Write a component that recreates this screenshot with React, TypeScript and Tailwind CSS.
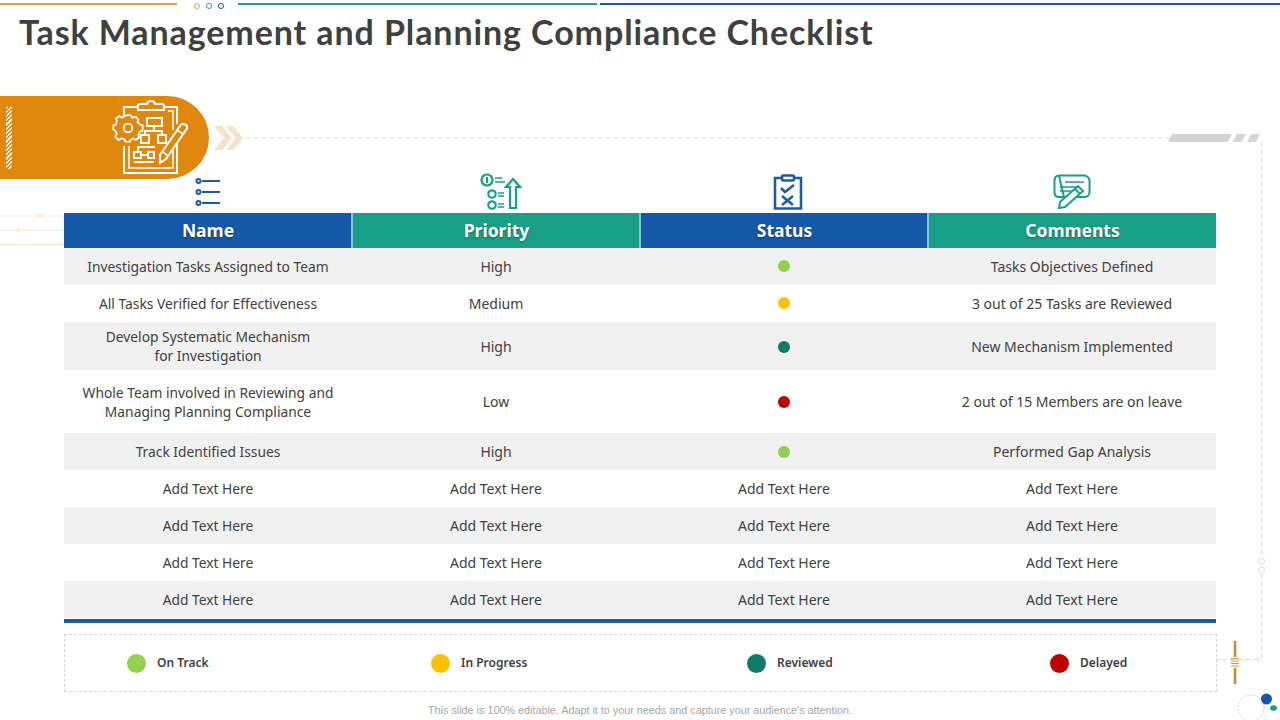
import React from "react";

const body = { fontFamily: '"Noto Sans", "Open Sans", sans-serif' };

function Decor() {
  return (
    <svg className="absolute left-0 top-0 pointer-events-none" width="1280" height="720" viewBox="0 0 1280 720" fill="none">
      <path d="M245 138H1170" stroke="#d9d9d9" strokeDasharray="5 3" />
      <path d="M1261.5 142V659.5H1217" stroke="#d9d9d9" strokeDasharray="5 3" />
      <path d="M1172 134H1232L1228 142H1168Z" fill="#d4d4d4" />
      <path d="M1237 134H1246L1242 142H1233Z" fill="#d4d4d4" />
      <path d="M1251 134H1260L1256 142H1247Z" fill="#d4d4d4" />
      <circle cx="1261.5" cy="561" r="3" stroke="#dcdcdc" fill="#fff" />
      <circle cx="1261.5" cy="570" r="3" stroke="#dcdcdc" fill="#fff" />
      <path d="M1235 641V657M1235 668V684" stroke="#c98a2b" strokeWidth="2.500" />
      <path d="M1231 658.5H1239M1231 661H1239M1231 663.500H1239M1231 666H1239" stroke="#d29a3c" />
      <circle cx="1251" cy="708" r="13" stroke="#cdb796" strokeDasharray="1 1.500" />
      <circle cx="1266.500" cy="699" r="5.500" fill="#1558a8" />
      <ellipse cx="1273.500" cy="708" rx="3.500" ry="2.800" fill="#17a085" />
      <path d="M0 216H64M0 230H64M0 244.500H64" stroke="#f8e8d4" />
      <path d="M37 216l3-2 3 2-3 2zM15 230l3-2 3 2-3 2z" fill="#f8e8d4" />
      <path d="M214 126H222L232 138L222 150H214L224 138Z" fill="#f6e2ca" />
      <path d="M226 126H233L243 138L233 150H226L236 138Z" fill="#f6e2ca" />
    </svg>
  );
}

function BannerIcon() {
  return (
    <svg width="78" height="76" viewBox="0 0 78 76" fill="none" stroke="#fff" strokeWidth="2">
      <path d="M13 16V7H27M53 7H66V24M66 44V73H13V46" />
      <path d="M57 11H62V30M62 50V68H18V46" strokeWidth="1.600" />
      <path d="M27 10V5C27 4 28 4 30 4H36C37 0 43 0 44 4H50C52 4 53 5 53 6V10Z" />
      <g transform="translate(17 28) scale(.86) translate(-16 -28)">
        <path d="M16 13L19 13L21 16L25 15L28 18L27 21L30 24L33 25V31L30 32L28 36L29 39L25 42L22 40L19 42L18 44H13L12 41L8 40L5 42L1 38L3 35L1 31L-1 30V25L2 24L3 20L2 17L6 14L9 16L12 14Z" />
        <circle cx="16" cy="28" r="5" />
      </g>
      <rect x="36" y="18" width="15" height="8" />
      <rect x="30" y="35" width="8" height="8" />
      <rect x="47" y="35" width="8" height="8" />
      <path d="M43 26V31M34 35V31H51V35" />
      <rect x="23" y="52" width="7" height="6" />
      <rect x="37" y="52" width="6" height="6" />
      <path d="M30 55H37M27 52V47H44M23 62H43" />
      <path d="M49 63V55L69 26C70 24 73 23 75 25C77 27 76 29 75 30L55 59Z" />
      <path d="M66 30L72 34M52 52L57 56" strokeWidth="1.600" />
    </svg>
  );
}

function ListIcon() {
  return (
    <svg width="26" height="30" viewBox="0 0 26 30" fill="none" stroke="#1f5ba5" strokeWidth="2">
      <circle cx="3.500" cy="4" r="2" />
      <circle cx="3.500" cy="15" r="2" />
      <circle cx="3.500" cy="26" r="2" />
      <path d="M7 4H25M7 15H25M7 26H25" />
    </svg>
  );
}

function PriorityIcon() {
  return (
    <svg width="42" height="38" viewBox="0 0 42 38" fill="none" stroke="#17a085" strokeWidth="2.200">
      <circle cx="7" cy="7" r="5.500" />
      <path d="M7 4V10" />
      <circle cx="12" cy="21" r="3.700" />
      <circle cx="12" cy="32" r="3.700" />
      <path d="M15 5H22M15 9H25M18 20H24M18 23H24M18 31H24M18 34H24" strokeWidth="1.600" />
      <path d="M30 35V14H26L33 6L40 14H36V35Z" />
    </svg>
  );
}

function StatusIcon() {
  return (
    <svg width="30" height="36" viewBox="0 0 30 36" fill="none" stroke="#1f5ba5" strokeWidth="2.600">
      <path d="M9 4H2V34.500H28V4H21" />
      <rect x="9" y="1.500" width="12" height="5" rx="1.500" />
      <path d="M8 14L12 18L21 11" />
      <path d="M9 22L20 31M20 22L9 31" />
    </svg>
  );
}

function CommentIcon() {
  return (
    <svg width="38" height="36" viewBox="0 0 38 36" fill="none" stroke="#17a085" strokeWidth="2">
      <path d="M6 1.500H31C34 1.500 36.500 4 36.500 7V18C36.500 21 34 23 31 23H24M11 23H6C3 23 1.500 21 1.500 18V7C1.500 4 3 1.500 6 1.500Z" />
      <path d="M12 8H31M7 13H26M7 17H18" strokeWidth="1.600" />
      <path d="M7 28L25 12L30 17L12 33L6 34Z" />
      <path d="M22 15L27 20" />
    </svg>
  );
}

const rows: { name: React.ReactNode; priority: string; status: string | null; comment: string; h: string; shade: boolean }[] = [
  { name: "Investigation Tasks Assigned to Team", priority: "High", status: "bg-[#92d050] -translate-y-px", comment: "Tasks Objectives Defined", h: "h-[37px]", shade: true },
  { name: "All Tasks Verified for Effectiveness", priority: "Medium", status: "bg-[#ffc000] -translate-y-px", comment: "3 out of 25 Tasks are Reviewed", h: "h-[37px]", shade: false },
  { name: <>Develop Systematic Mechanism<br />for Investigation</>, priority: "High", status: "bg-[#0f7a67] translate-y-px", comment: "New Mechanism Implemented", h: "h-[48px]", shade: true },
  { name: <>Whole Team involved in Reviewing and<br />Managing Planning Compliance</>, priority: "Low", status: "bg-[#c00000]", comment: "2 out of 15 Members are on leave", h: "h-[63px]", shade: false },
  { name: "Track Identified Issues", priority: "High", status: "bg-[#92d050]", comment: "Performed Gap Analysis", h: "h-[37px]", shade: true },
  { name: "Add Text Here", priority: "Add Text Here", status: null, comment: "Add Text Here", h: "h-[37px]", shade: false },
  { name: "Add Text Here", priority: "Add Text Here", status: null, comment: "Add Text Here", h: "h-[37px]", shade: true },
  { name: "Add Text Here", priority: "Add Text Here", status: null, comment: "Add Text Here", h: "h-[37px]", shade: false },
  { name: "Add Text Here", priority: "Add Text Here", status: null, comment: "Add Text Here", h: "h-[37px]", shade: true },
];

const legend = [
  { c: "bg-[#92d050]", t: "On Track" },
  { c: "bg-[#ffc000]", t: "In Progress" },
  { c: "bg-[#0f7a67]", t: "Reviewed" },
  { c: "bg-[#c00000]", t: "Delayed" },
];

export default function App() {
  return (
    <div className="relative w-[1280px] h-[720px] overflow-hidden bg-white" style={body}>
      <Decor />
      <div className="relative">
        <div className="flex items-start h-[7px] pt-[3px]">
          <div className="w-[177px] h-[2px] bg-[#dda24a]" />
          <div className="ml-[17px] w-[44px] flex gap-[6px]">
            <span className="w-[6px] h-[6px] rounded-full border border-[#dda24a]" />
            <span className="w-[6px] h-[6px] rounded-full border border-[#3d9c8c]" />
            <span className="w-[6px] h-[6px] rounded-full border border-[#1f5ba5]" />
          </div>
          <div className="w-[359px] h-[2px] bg-[#2a9d8a]" />
          <div className="ml-[3px] flex-1 h-[2px] bg-[#1f5ba5]" />
        </div>
        <h1 className="pl-[19px] h-[89px] pt-[3px] text-[34px] leading-[44px] font-bold text-[#404040] tracking-[0.9px] whitespace-nowrap" style={{ fontFamily: '"Lato", sans-serif' }}>
          Task Management and Planning Compliance Checklist
        </h1>
        <div className="w-[209px] h-[83px] bg-[#e0870e] rounded-r-[42px] flex items-center relative">
          <div className="ml-[6px] w-[6px] h-[62px] bg-[repeating-linear-gradient(135deg,#ffffff_0px,#ffffff_1.5px,#e0870e_1.5px,#e0870e_3px)]" />
          <div className="ml-[99px]"><BannerIcon /></div>
        </div>
        <div className="relative mt-[-7px] ml-[64px] w-[1152px] h-[41px] pb-[2px] grid grid-cols-4">
          <div className="flex justify-center items-center"><ListIcon /></div>
          <div className="flex justify-center items-center pl-[9px]"><PriorityIcon /></div>
          <div className="flex justify-center items-center pl-[8px]"><StatusIcon /></div>
          <div className="flex justify-center items-center"><CommentIcon /></div>
        </div>
        <div className="ml-[64px] w-[1152px] border-b-[4px] border-[#1f5ba5]">
          <div className="grid grid-cols-4 h-[35px] text-white text-[17.5px] font-bold [text-shadow:0_1px_2px_rgba(0,0,0,0.35)]">
            <div className="bg-[#1558a8] flex items-center justify-center">Name</div>
            <div className="bg-[#17a085] ml-[-1px] border-l-2 border-[#8cc4d0] flex items-center justify-center">Priority</div>
            <div className="bg-[#1558a8] ml-[-1px] border-l-2 border-[#8cc4d0] flex items-center justify-center">Status</div>
            <div className="bg-[#17a085] ml-[-1px] border-l-2 border-[#8cc4d0] flex items-center justify-center">Comments</div>
          </div>
          {rows.map((r, i) => (
            <div key={i} className={`grid grid-cols-4 items-center text-center text-[14px] leading-[19px] text-[#404040] ${r.h} ${r.shade ? "bg-[#f1f1f1]" : "bg-white"}`}>
              <div className="text-[13.8px]">{r.name}</div>
              <div>{r.priority}</div>
              <div className="flex justify-center">
                {r.status ? <span className={`w-[12px] h-[12px] rounded-full ${r.status}`} /> : "Add Text Here"}
              </div>
              <div className="whitespace-nowrap">{r.comment}</div>
            </div>
          ))}
          <div className="h-[1px] bg-white" />
        </div>
        <div className="mt-[11px] ml-[64px] w-[1153px] h-[58px] border border-dashed border-[#d4d4d4] grid grid-cols-[304px_316px_303px_1fr] items-center pl-[62px] bg-white">
          {legend.map((l) => (
            <div key={l.t} className="flex items-center">
              <span className={`w-[19px] h-[19px] rounded-full ${l.c}`} />
              <span className="ml-[11px] text-[12px] font-semibold text-[#404040] whitespace-nowrap">{l.t}</span>
            </div>
          ))}
        </div>
        <p className="mt-[11px] text-center text-[10.8px] leading-[14px] text-[#a6a6a6]" style={{ fontFamily: '"Liberation Sans", sans-serif' }}>
          This slide is 100% editable. Adapt it to your needs and capture your audience's attention.
        </p>
      </div>
    </div>
  );
}
